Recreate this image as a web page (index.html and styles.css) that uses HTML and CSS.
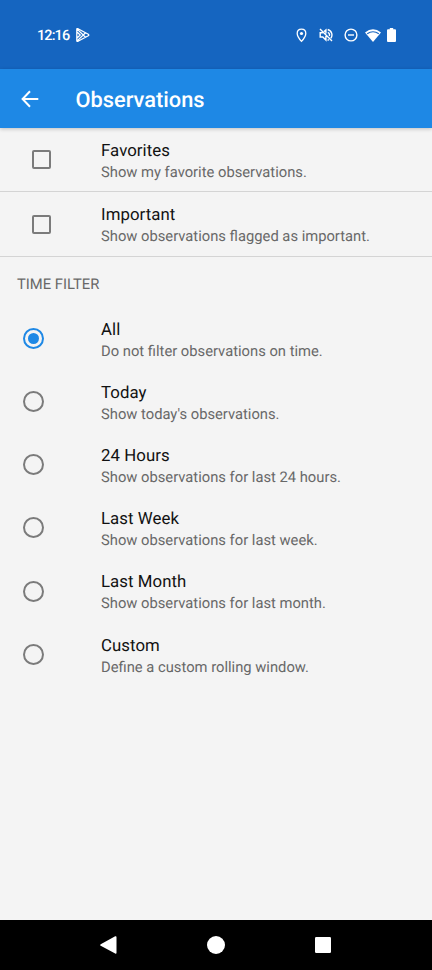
FILE: index.html
```html
<!DOCTYPE html>
<html lang="en">
<head>
<meta charset="utf-8">
<title>Observations</title>
<link rel="stylesheet" href="styles.css">
</head>
<body>
<div class="status">
  <span class="time">12:16</span>
  <svg class="play" width="16" height="16" viewBox="0 0 16 16" fill="none" stroke="#fff" stroke-width="1.3" stroke-linejoin="round"><path d="M1.8 2.5Q1.8 1.2 3 1.7L13.3 7.2Q14.4 8 13.3 8.8L3 14.3Q1.8 14.8 1.8 13.5ZM2.4 2.4 10.3 10M2.4 13.6 10.3 6M2 5 5.2 8 2 11"/></svg>
  <div class="indicators">
    <svg width="11" height="15" viewBox="0 0 11 15"><path d="M5.5 1.2C3 1.2 1.2 3 1.2 5.4c0 3.2 4.3 8 4.3 8s4.3-4.8 4.3-8C9.8 3 8 1.2 5.5 1.2Z" fill="none" stroke="#fff" stroke-width="1.3"/><circle cx="5.5" cy="5.5" r="1.6" fill="#fff"/></svg>
    <svg width="14" height="14" viewBox="0 0 14 14" fill="none" stroke="#fff" stroke-width="1.4"><path d="M1 1 13 13M3.8 4.8H1.2V9H3.8L6.9 12V8M5 3.6 6.9 2V5.5M8.7 1.5C13.5 3 13.7 8 11.8 10.2M8.8 4.3C10.6 5 10.7 6.7 10.3 8M8.5 12.3 10 11.6"/></svg>
    <svg width="14" height="14" viewBox="0 0 14 14" fill="none" stroke="#fff" stroke-width="1.4"><circle cx="7" cy="7" r="5.9"/><path d="M4 7H10"/></svg>
    <svg width="16" height="13" viewBox="0 0 16 13"><path d="M0 3.4Q8-3 16 3.4L8 13Z" fill="#fff"/><path d="M2.2 4.8Q8 .6 13.8 4.8" fill="none" stroke="#1565c0" stroke-width="1.1"/></svg>
    <svg width="9" height="14" viewBox="0 0 9 14"><path d="M2.8 0H6.2V1.3H8Q9 1.3 9 2.3V13Q9 14 8 14H1Q0 14 0 13V2.3Q0 1.3 1 1.3H2.8Z" fill="#fff"/></svg>
  </div>
</div>
<header class="appbar">
  <svg width="18" height="18" viewBox="0 0 18 18" fill="none" stroke="#fff" stroke-width="2"><path d="M17.3 9H2M9 1.3 1.6 9 9 16.7"/></svg>
  <h1>Observations</h1>
</header>
<main>
  <div class="row check"><span class="box"></span><div class="text"><div class="name">Favorites</div><div class="desc">Show my favorite observations.</div></div></div>
  <div class="row check"><span class="box"></span><div class="text"><div class="name">Important</div><div class="desc">Show observations flagged as important.</div></div></div>
  <h2>TIME FILTER</h2>
  <div class="row"><span class="radio on"></span><div class="text"><div class="name">All</div><div class="desc">Do not filter observations on time.</div></div></div>
  <div class="row"><span class="radio"></span><div class="text"><div class="name">Today</div><div class="desc">Show today's observations.</div></div></div>
  <div class="row"><span class="radio"></span><div class="text"><div class="name">24 Hours</div><div class="desc">Show observations for last 24 hours.</div></div></div>
  <div class="row"><span class="radio"></span><div class="text"><div class="name">Last Week</div><div class="desc">Show observations for last week.</div></div></div>
  <div class="row"><span class="radio"></span><div class="text"><div class="name">Last Month</div><div class="desc">Show observations for last month.</div></div></div>
  <div class="row"><span class="radio"></span><div class="text"><div class="name">Custom</div><div class="desc">Define a custom rolling window.</div></div></div>
</main>
<nav class="navbar">
  <svg width="17" height="18" viewBox="0 0 17 18"><path d="M15.2.3Q16.5-.3 16.5 1.2V16.8Q16.5 18.3 15.2 17.6L.7 9.8Q-.4 9 .7 8.2Z" fill="#fff"/></svg>
  <svg width="18" height="18" viewBox="0 0 18 18"><circle cx="9" cy="9" r="9" fill="#fff"/></svg>
  <svg width="16" height="16" viewBox="0 0 16 16"><rect width="16" height="16" rx="1.2" fill="#fff"/></svg>
</nav>
</body>
</html>
```
FILE: styles.css
```css
* { box-sizing: border-box; }
body {
  margin: 0;
  height: 970px;
  display: flex;
  flex-direction: column;
  background: #f4f4f4;
  font-family: Roboto, sans-serif;
  text-rendering: geometricPrecision;
  overflow: hidden;
}
svg { display: block; flex: none; }
.status {
  height: 69px;
  flex: none;
  display: flex;
  align-items: center;
  padding: 1px 36px 0 37px;
  background: #1565c0;
  color: #fff;
}
.time { width: 37.5px; font-size: 14.5px; font-weight: 500; letter-spacing: -0.9px; white-space: nowrap; }
.indicators { margin-left: auto; display: flex; align-items: center; }
.indicators svg:nth-child(1) { margin-right: 12px; }
.indicators svg:nth-child(2) { margin-right: 11px; }
.indicators svg:nth-child(3) { margin-right: 7px; }
.indicators svg:nth-child(4) { margin-right: 6px; }
.appbar {
  height: 59px;
  flex: none;
  display: flex;
  align-items: center;
  padding: 1px 20px 0 21px;
  gap: 36.5px;
  background: #1e88e5;
  color: #fff;
  box-shadow: 0 1px 4px rgba(0, 0, 0, 0.22);
}
h1 { margin: 0; padding-top: 3px; font-size: 21.8px; line-height: 26px; font-weight: 500; }
main { flex: 1; }
.row { height: 63.2px; display: flex; align-items: center; padding-left: 23px; }
.check { height: 64.4px; padding-left: 32px; border-bottom: 1px solid #d4d4d4; }
.box { width: 19px; height: 19px; border: 2px solid #7b7b7b; border-radius: 2px; margin-right: 50px; }
.radio {
  width: 21px;
  height: 21px;
  border: 2px solid #7b7b7b;
  border-radius: 50%;
  margin-right: 57px;
  display: flex;
  align-items: center;
  justify-content: center;
}
.on { border-color: #1e88e5; }
.on::after { content: ""; width: 11px; height: 11px; border-radius: 50%; background: #1e88e5; }
.text { padding-top: 3.4px; }
.name { font-size: 16.8px; line-height: 22px; color: #111; letter-spacing: 0.07px; }
.desc { font-size: 14.75px; line-height: 21px; color: #686868; white-space: nowrap; }
h2 { margin: 0; height: 50px; padding: 17px 17px 0; font-size: 14.8px; line-height: 20px; font-weight: 400; color: #686868; }
.navbar {
  height: 50px;
  flex: none;
  display: flex;
  align-items: center;
  justify-content: space-between;
  padding: 0 101px 0 100px;
  background: #000;
}
```
